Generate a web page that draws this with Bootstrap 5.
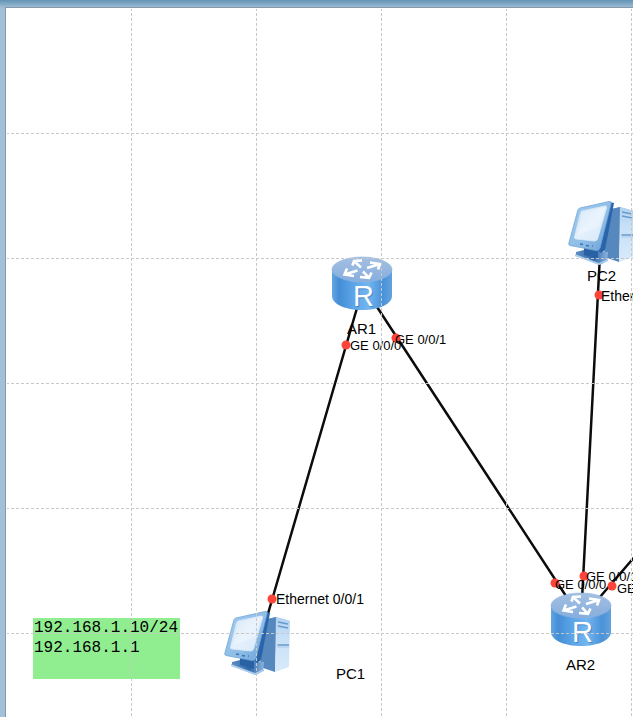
<!DOCTYPE html>
<html lang="en">
<head>
<meta charset="utf-8">
<meta name="viewport" content="width=device-width, initial-scale=1">
<title>Network topology</title>
<link href="https://cdn.jsdelivr.net/npm/bootstrap@5.3.0/dist/css/bootstrap.min.css" rel="stylesheet">
<style>
  body { font-family: "Liberation Sans", Arial, sans-serif; color: #000; }
  .frame { padding: 7px 0 0 5px; background: linear-gradient(#6294b3, #a3c0da 8px); }
  .topology { border-top: 1px solid #8799a8; border-left: 1px solid #8799a8; }
  .device { position: absolute; width: 70px; height: 70px; }
  .tag { position: absolute; white-space: nowrap; line-height: 16px; font-size: 13px; }
  .tag-host { font-size: 14px; }
  .tag-name { font-size: 15px; }
  .note { position: absolute; left: 27px; top: 610px; width: 147px; height: 61px; padding-left: 1px;
    background: #90ee90; font: 16px/20px "Liberation Mono", "Courier New", monospace; }
  .ar1 { left: 321px; top: 242px; } .ar2 { left: 540px; top: 578px; }
  .pc1 { left: 216px; top: 599px; } .pc2 { left: 560px; top: 189px; }
  .ar1-name { left: 341px; top: 313px; } .ar2-name { left: 560px; top: 649px; }
  .pc1-name { left: 330px; top: 658px; } .pc2-name { left: 581px; top: 260px; }
  .ar1-g0 { left: 344px; top: 330px; } .ar1-g1 { left: 389px; top: 324px; }
  .pc1-e { left: 270px; top: 583px; } .pc2-e { left: 595px; top: 280px; }
  .ar2-g0 { left: 549px; top: 569px; } .ar2-g1 { left: 580px; top: 561px; } .ar2-g2 { left: 611px; top: 573px; }
</style>
<script src="https://cdn.jsdelivr.net/npm/bootstrap@5.3.0/dist/js/bootstrap.bundle.min.js"></script>
</head>
<body>
<svg width="0" height="0" class="position-absolute" aria-hidden="true">
  <defs>
    <linearGradient id="side"><stop offset="0" stop-color="#66a5e2"/><stop offset=".12" stop-color="#438ed6"/><stop offset=".35" stop-color="#5ca4e6"/><stop offset=".6" stop-color="#72b5f0"/><stop offset=".85" stop-color="#4a92d8"/><stop offset="1" stop-color="#63a2dd"/></linearGradient>
    <linearGradient id="lid" x2="0" y2="1"><stop offset="0" stop-color="#a4bfe2"/><stop offset="1" stop-color="#86aedd"/></linearGradient>
    <linearGradient id="bezel" x2="1" y2="1"><stop offset="0" stop-color="#a5cdf0"/><stop offset=".6" stop-color="#8dbce6"/><stop offset="1" stop-color="#6a9fd4"/></linearGradient>
    <linearGradient id="glass" x2="1" y2="1"><stop offset="0" stop-color="#c6def4"/><stop offset=".5" stop-color="#e4f0fc"/><stop offset="1" stop-color="#d6e8f9"/></linearGradient>
    <linearGradient id="tower" x2="0" y2="1"><stop offset="0" stop-color="#b0d2f0"/><stop offset=".35" stop-color="#c6e0f7"/><stop offset="1" stop-color="#d9eafa"/></linearGradient>
    <linearGradient id="foot"><stop offset="0" stop-color="#5c8cc2"/><stop offset=".55" stop-color="#3268a9"/><stop offset="1" stop-color="#8bb5df"/></linearGradient>
    <symbol id="router" viewBox="0 0 70 70">
      <path d="M5 19v27c0 8 13 14 30 14s30-6 30-14V19z" fill="url(#side)"/>
      <ellipse cx="35" cy="19.500" rx="30" ry="12.500" fill="url(#lid)" stroke="#8eb4e2" stroke-width=".6"/>
      <g fill="none" stroke="#fff" stroke-width="2.600">
        <path d="M25.500 15.500l1.500-4.500 8-.5M27 11l7 6.500"/>
        <path d="M43 12.500l10 1.500-2 5.500M53 14l-13 4"/>
        <path d="M20 18.500l-2.500 6 9.500 1.500M17.500 24.500l13-4"/>
        <path d="M33 27l9 .8 2.500-5.300M42 27.800l-6-6.300"/>
      </g>
      <text x="27" y="57" font-family="Liberation Sans, Arial, sans-serif" font-size="29" fill="#2864a5" opacity=".5">R</text>
      <text x="26" y="56" font-family="Liberation Sans, Arial, sans-serif" font-size="29" fill="#fff">R</text>
    </symbol>
    <symbol id="pc" viewBox="0 0 70 70">
      <path d="M42 13l12-3 14 4-14 1z" fill="#8ab3dd"/>
      <path d="M41 13l13-3 1 4-2 51-15-5z" fill="#5788bd"/>
      <path d="M54 10l14 4-1 46-14 5z" fill="url(#tower)"/>
      <path d="M56 15l10 2M56 19l10 2M55.500 38H67" stroke="#689acb" stroke-width="1.500" fill="none"/>
      <path d="M55.500 40H67" stroke="#a7c9e9"/>
      <path d="M10 55l8-2 24 2-1 9-7 4-24-9z" fill="url(#foot)"/>
      <path d="M9 57l24 9 9-4v2l-9 4-24-9z" fill="#abcdec"/>
      <path d="M18 50h14v12l-14-4z" fill="#2862a5"/>
      <path d="M44 5l4 1-9 47-4 3-4-3z" fill="#2a65ab"/>
      <path d="M14 11L43 4.500q3-.5 2 2.500L34 51q-1 3-4 2.500L4 48.500q-2-.5-1-3l9-33q.5-1 2-1.500z" fill="url(#bezel)" stroke="#72a6d7" stroke-width=".8"/>
      <path d="M16 14l23-5q2-.3 1.500 2l-9 31q-.7 2-3 2L10 42q-2-.3-1.500-2l6-24q.5-1.600 1.500-2z" fill="url(#glass)" stroke="#dcecfb" stroke-width=".8"/>
      <path d="M16 15l23-5-6 20-22 8z" fill="#fff" opacity=".25"/>
      <path d="M14 47l3 .5M20 48.500l3 .5M26 49l1 .2" stroke="#3e73b1" stroke-width="1.300"/>
    </symbol>
    <pattern id="cells" width="125" height="125" patternUnits="userSpaceOnUse">
      <path d="M.5 0v125M0 .5h125" stroke="#c8c8c8" stroke-dasharray="3 2"/>
    </pattern>
  </defs>
</svg>
<div class="frame d-flex vh-100 overflow-hidden">
  <main class="topology position-relative flex-grow-1 bg-white overflow-hidden">
    <svg class="position-absolute top-0 start-0 w-100 h-100" aria-hidden="true">
      <g stroke="#0c0c0c" stroke-width="2.500">
        <path d="M358 276L252 640M356 276L575 611M595 227L575 611M575 611L675 495"/>
      </g>
    </svg>
    <svg class="device ar1" role="img" aria-label="Router AR1"><use href="#router"/></svg>
    <svg class="device ar2" role="img" aria-label="Router AR2"><use href="#router"/></svg>
    <svg class="device pc1" role="img" aria-label="Computer PC1"><use href="#pc"/></svg>
    <svg class="device pc2" role="img" aria-label="Computer PC2"><use href="#pc"/></svg>
    <svg class="position-absolute top-0 start-0 w-100 h-100" aria-hidden="true">
      <g fill="#fb443a">
        <circle cx="340" cy="337" r="4.500"/><circle cx="390" cy="330" r="4.500"/>
        <circle cx="266" cy="591" r="4.500"/><circle cx="593" cy="287" r="4.500"/>
        <circle cx="549" cy="575" r="4.500"/><circle cx="578" cy="568" r="4.500"/><circle cx="606" cy="578" r="4.500"/>
      </g>
    </svg>
    <span class="tag tag-name ar1-name">AR1</span>
    <span class="tag tag-name ar2-name">AR2</span>
    <span class="tag tag-name pc1-name">PC1</span>
    <span class="tag tag-name pc2-name">PC2</span>
    <span class="tag ar1-g0">GE 0/0/0</span>
    <span class="tag ar1-g1">GE 0/0/1</span>
    <span class="tag tag-host pc1-e">Ethernet 0/0/1</span>
    <span class="tag tag-host pc2-e">Ethernet 0/0/1</span>
    <span class="tag ar2-g0">GE 0/0/0</span>
    <span class="tag ar2-g1">GE 0/0/1</span>
    <span class="tag ar2-g2">GE 0/0/2</span>
    <div class="note">192.168.1.10/24<br>192.168.1.1</div>
    <svg class="position-absolute top-0 start-0 w-100 h-100 pe-none" aria-hidden="true"><rect x="1" y="1" width="100%" height="100%" fill="url(#cells)"/></svg>
  </main>
</div>
</body>
</html>
